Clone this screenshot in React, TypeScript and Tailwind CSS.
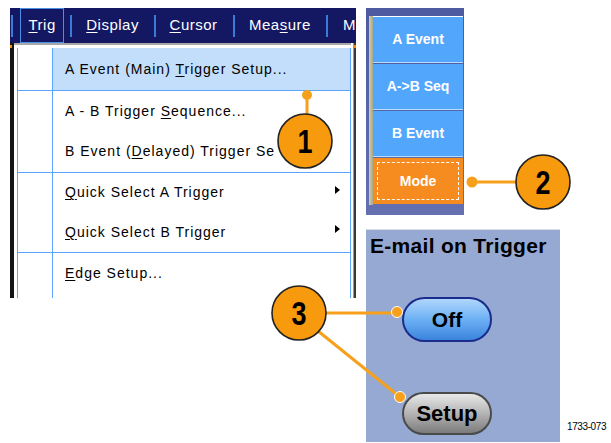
import React from 'react';

const blue = 'bg-[#5aa6ff]';

function U({ children }: { children: React.ReactNode }) {
    return <span className="underline underline-offset-[2px] decoration-1">{children}</span>;
}

interface MenuRow {
    label: React.ReactNode;
    sub?: boolean;
    active?: boolean;
    h: string;
}

// third label is cut where callout 1 covers it
const rows: (MenuRow | 'sep')[] = [
    { label: <>A Event (Main) <U>T</U>rigger Setup...</>, active: true, h: 'h-[42px]' },
    'sep',
    { label: <>A - B Trigger <U>S</U>equence...</>, h: 'h-[40px]' },
    { label: <>B Event (<U>D</U>elayed) Trigger Se</>, h: 'h-[41px]' },
    'sep',
    { label: <><U>Q</U>uick Select A Trigger</>, sub: true, h: 'h-[39px]' },
    { label: <><U>Q</U>uick Select B Trigger</>, sub: true, h: 'h-[40px]' },
    'sep',
    { label: <><U>E</U>dge Setup...</>, h: 'h-[40px]' },
];

function MenuBar() {
    const items = [
        <><U>D</U>isplay</>,
        <><U>C</U>ursor</>,
        <>Mea<U>s</U>ure</>,
    ];
    return (
        <div className="h-[35px] bg-[#141862] flex items-center text-white text-[15px] tracking-[0.5px] overflow-hidden">
            <div className="w-[2px] h-[22px] bg-[#3a7ad8] ml-[1px]" />
            <div className="ml-[7px] w-[46px] h-full border border-[#4a90e8] flex items-center justify-center">
                <span><U>T</U>rig</span>
            </div>
            <div className="w-[2px] h-[22px] bg-[#3a7ad8] ml-[6px]" />
            <span className="ml-[14px] w-[70px]">{items[0]}</span>
            <div className="w-[2px] h-[22px] bg-[#3a7ad8]" />
            <span className="ml-[14px] w-[66px]">{items[1]}</span>
            <div className="w-[2px] h-[22px] bg-[#3a7ad8]" />
            <span className="ml-[14px] w-[80px]">{items[2]}</span>
            <div className="w-[2px] h-[22px] bg-[#3a7ad8]" />
            <span className="ml-[15px]">M</span>
        </div>
    );
}

function Dropdown() {
    return (
        <div className="flex h-[255px]">
            <div className="w-[4px] bg-[#151515] flex flex-col">
                <div className="h-[3px] mt-[2px] bg-[#f08a1a] w-[2px]" />
            </div>
            <div className="flex-1 flex flex-col border-t-2 border-[#a8a8a8] bg-white pl-[3px] pt-[3px]">
                <div className="flex-1 flex flex-col border-l border-r border-[#5aa6ff] relative">
                    <div className="absolute left-[34px] top-0 bottom-0 w-px bg-[#5aa6ff]" />
                    {rows.map((r, i) =>
                        r === 'sep' ? (
                            <div key={i} className={`h-px ${blue}`} />
                        ) : (
                            <div key={i} className={`flex ${r.h}`}>
                                <div className="w-[35px] shrink-0" />
                                <div
                                    className={`flex-1 flex items-center pl-[12px] pr-[10px] text-[14px] tracking-[1px] text-black overflow-hidden ${
                                        r.active ? 'bg-[#c2defa]' : ''
                                    }`}
                                >
                                    <span className="flex-1 whitespace-nowrap">{r.label}</span>
                                    {r.sub && (
                                        <span className="w-0 h-0 border-y-[4px] border-y-transparent border-l-[5px] border-l-black mb-[6px]" />
                                    )}
                                </div>
                            </div>
                        )
                    )}
                </div>
            </div>
            <div className="w-[2px] bg-white" />
            <div className="w-[3px] bg-[#3a3a3a] border-l border-[#9a9a9a] flex flex-col">
                <div className="h-[3px] mt-[2px] bg-[#f08a1a]" />
            </div>
        </div>
    );
}

function SideButtons() {
    const labels = ['A Event', 'A->B Seq', 'B Event'];
    return (
        <div className="w-[98px] h-[207px] bg-gradient-to-b from-[#4e5aa0] to-[#6470b0] pt-[8px] pl-[3px] pr-[1px] pb-[10px] flex">
            <div className="w-[4px] bg-gradient-to-r from-[#d0d0b0] to-[#a8a888]" />
            <div className="flex-1 flex flex-col border-t border-white">
                {labels.map((l) => (
                    <div
                        key={l}
                        className="h-[46px] mb-px bg-[#52a6fc] border-b border-[#b8dcff] flex items-center justify-center text-white font-bold text-[14px]"
                    >
                        {l}
                    </div>
                ))}
                <div className="h-[46px] bg-[#f68b1f] p-[4px]">
                    <div className="h-full border border-dashed border-white flex items-center justify-center text-white font-bold text-[14px]">
                        Mode
                    </div>
                </div>
            </div>
        </div>
    );
}

function EmailPanel() {
    return (
        <div className="w-[194px] h-[213px] bg-[#95a9d3] border-t border-[#d8dce8] flex flex-col items-start">
            <div className="ml-[4px] mt-[3px] text-[21px] font-bold text-black leading-[26px] tracking-[0.3px]">
                E-mail on Trigger
            </div>
            <div className="ml-[36px] mt-[38px] w-[90px] h-[45px] rounded-full border-2 border-[#1c2c8c] bg-gradient-to-b from-[#b0d6fb] via-[#6cb0f4] to-[#3a84dc] flex items-center justify-center text-[21px] font-bold text-black">
                Off
            </div>
            <div className="ml-[36px] mt-[50px] w-[90px] h-[43px] rounded-full border-2 border-[#4a4a4a] bg-gradient-to-b from-[#e8e8e8] via-[#b4b4b4] to-[#7c7c7c] flex items-center justify-center text-[22px] font-bold text-black">
                Setup
            </div>
        </div>
    );
}

function Callouts() {
    const orange = '#f7a01c';
    const circ = (cx: number, cy: number, n: string) => (
        <g>
            <circle cx={cx} cy={cy} r={27} fill="#f89a0e" stroke="#222" strokeWidth={1.6} />
            <text
                x={cx}
                y={cy + 12}
                textAnchor="middle"
                fontFamily="Liberation Sans, Arial, sans-serif"
                fontWeight="bold"
                fontSize={34}
                textLength={15}
                lengthAdjust="spacingAndGlyphs"
                fill="#000"
            >
                {n}
            </text>
        </g>
    );
    return (
        <svg className="absolute inset-0 pointer-events-none" width={611} height={443}>
            <line x1={307} y1={95} x2={307} y2={116} stroke={orange} strokeWidth={3} />
            <circle cx={307} cy={95} r={5} fill={orange} />
            {circ(305, 141, '1')}

            <line x1={472} y1={182} x2={516} y2={182} stroke={orange} strokeWidth={3} />
            <circle cx={472} cy={182} r={5.5} fill={orange} />
            {circ(543, 182, '2')}

            <line x1={320} y1={313} x2={397} y2={313} stroke={orange} strokeWidth={3} />
            <line x1={318} y1={331} x2={400} y2={397} stroke={orange} strokeWidth={3} />
            <circle cx={397} cy={312} r={5.5} fill={orange} stroke="#fff" strokeWidth={1} />
            <circle cx={400} cy={397} r={5.5} fill={orange} stroke="#fff" strokeWidth={1} />
            {circ(299, 313, '3')}
        </svg>
    );
}

export default function App() {
    return (
        <div className="relative w-[611px] h-[443px] bg-white overflow-hidden font-['Liberation_Sans',Arial,sans-serif] flex">
            <div className="ml-[10px] mt-[8px] w-[346px] flex flex-col">
                <MenuBar />
                <Dropdown />
            </div>
            <div className="ml-[10px] mt-[8px] flex flex-col">
                <SideButtons />
                <div className="mt-[14px]">
                    <EmailPanel />
                </div>
            </div>
            <div className="self-end mb-[9px] ml-[7px] text-[10px] tracking-[-0.4px] text-black">1733-073</div>
            <Callouts />
        </div>
    );
}
